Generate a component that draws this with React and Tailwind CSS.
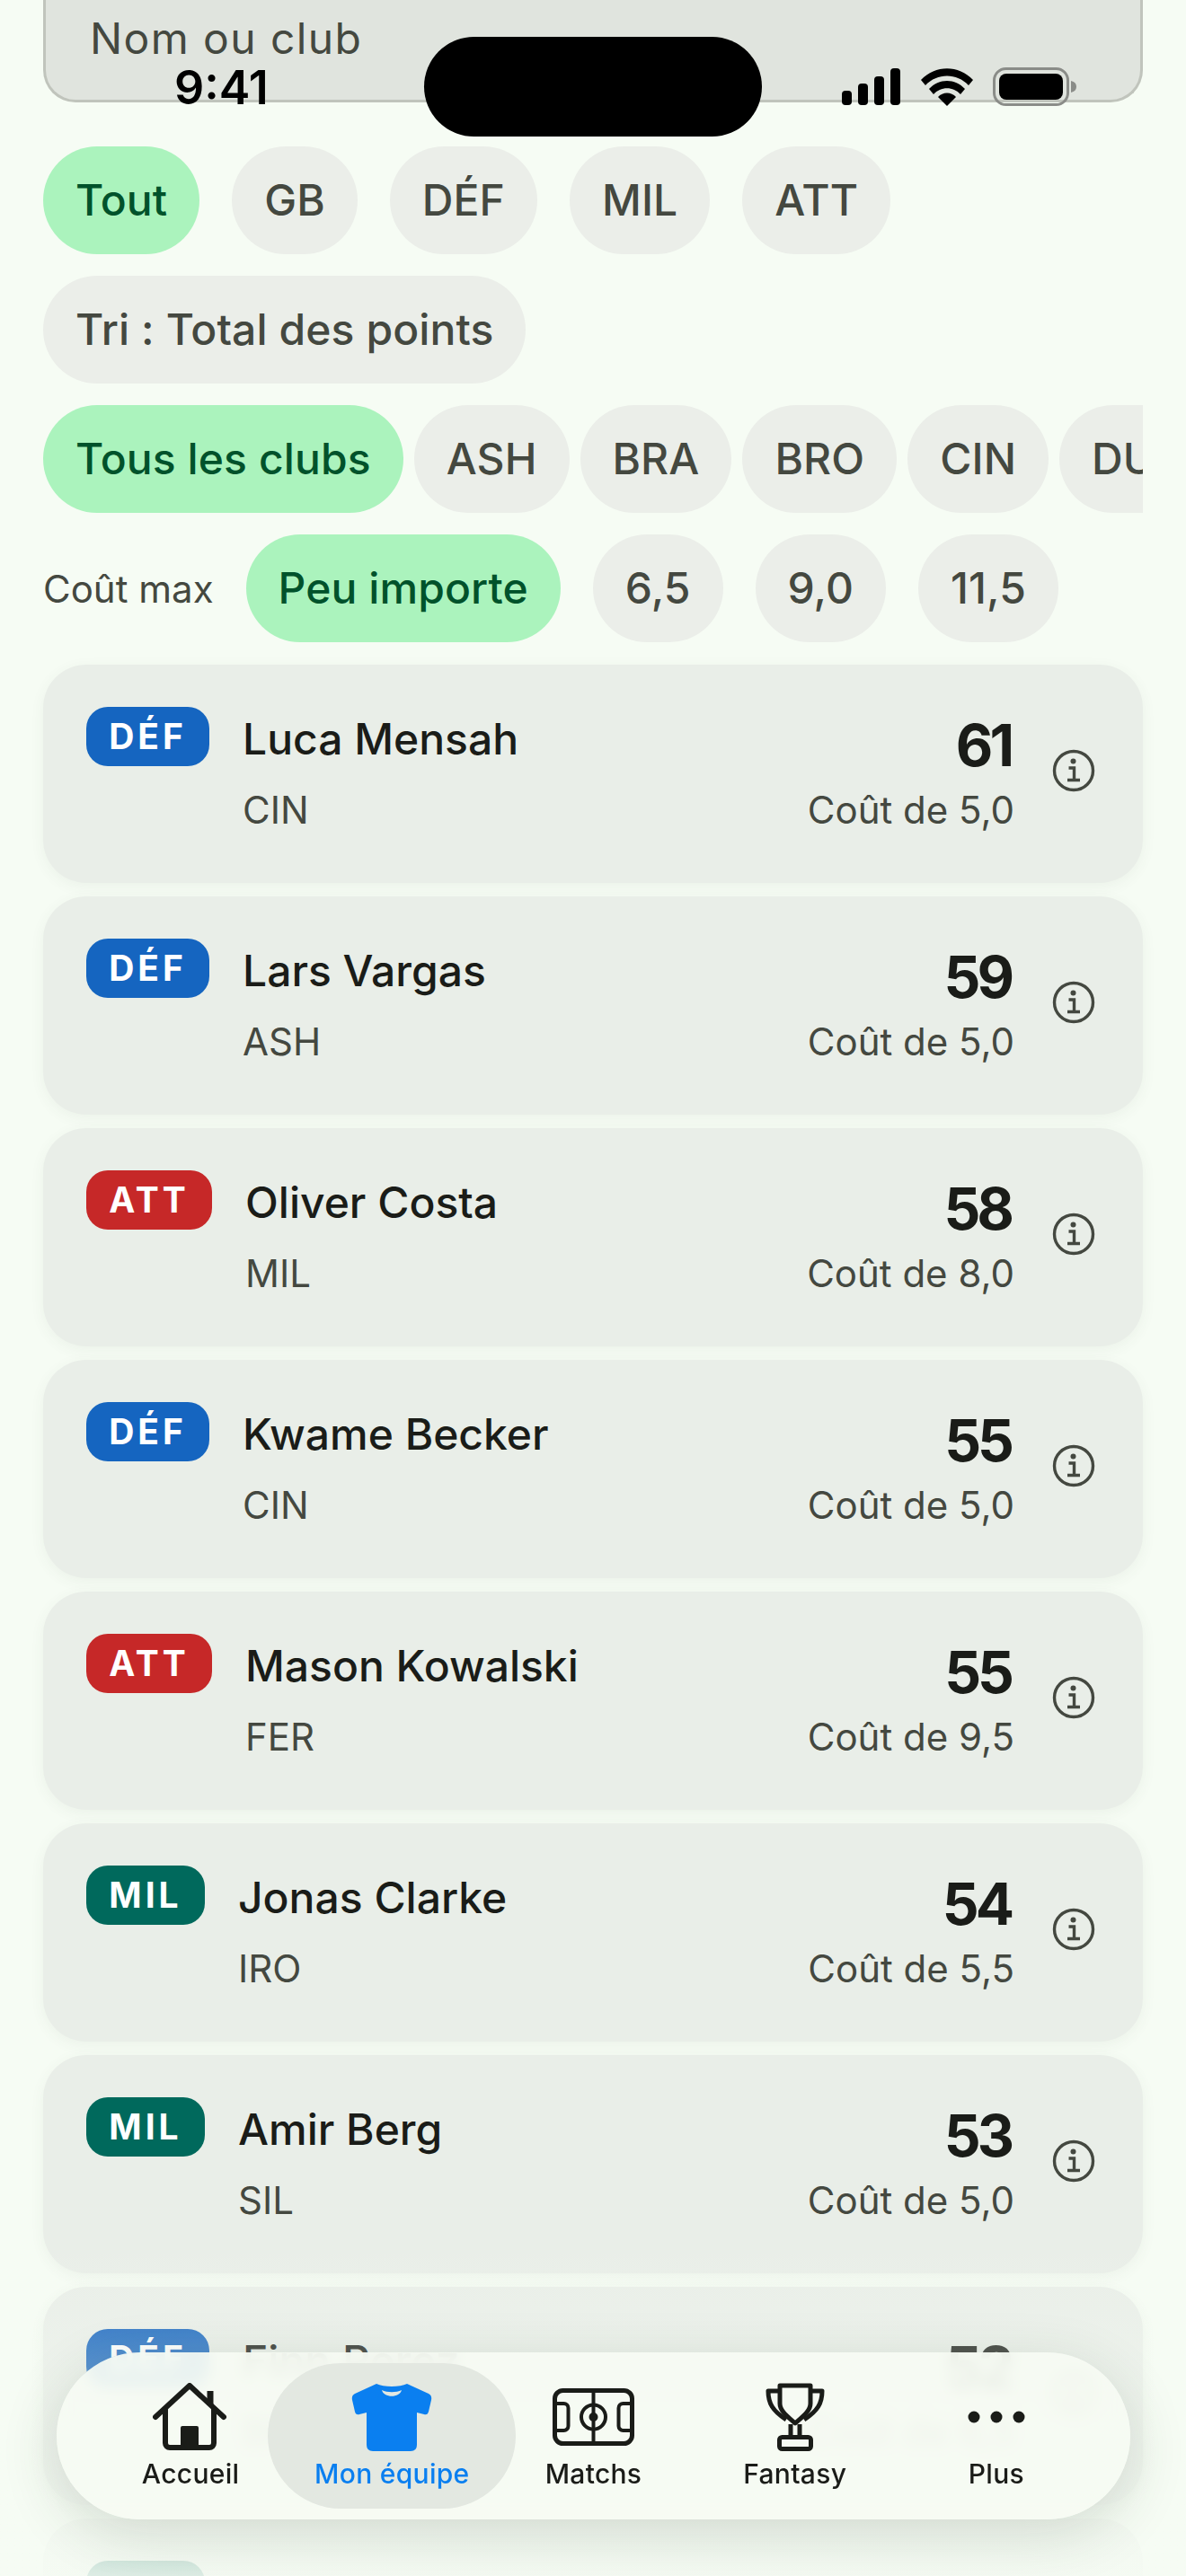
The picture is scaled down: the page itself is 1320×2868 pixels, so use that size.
import React from 'react';

const font = { fontFamily: 'Inter, "Liberation Sans", sans-serif' };

const BADGE = {
  'DÉF': 'bg-[#1565c0] w-[137px]',
  ATT: 'bg-[#c62828] w-[140px]',
  MIL: 'bg-[#00695c] w-[132px]',
};

const PLAYERS = [
  { pos: 'DÉF', name: 'Luca Mensah', club: 'CIN', pts: 61, cost: '5,0' },
  { pos: 'DÉF', name: 'Lars Vargas', club: 'ASH', pts: 59, cost: '5,0' },
  { pos: 'ATT', name: 'Oliver Costa', club: 'MIL', pts: 58, cost: '8,0' },
  { pos: 'DÉF', name: 'Kwame Becker', club: 'CIN', pts: 55, cost: '5,0' },
  { pos: 'ATT', name: 'Mason Kowalski', club: 'FER', pts: 55, cost: '9,5' },
  { pos: 'MIL', name: 'Jonas Clarke', club: 'IRO', pts: 54, cost: '5,5' },
  { pos: 'MIL', name: 'Amir Berg', club: 'SIL', pts: 53, cost: '5,0' },
  { pos: 'DÉF', name: 'Finn Perez', club: 'BRO', pts: 52, cost: '6,5' },
];

function Chip({ active, children }) {
  return (
    <div
      className={`h-[120px] shrink-0 rounded-full px-[36px] flex items-center text-[48px] font-medium tracking-[0.1px] ${
        active ? 'bg-[#abf3bd] text-[#00522b]' : 'bg-[#ebeee9] text-[#444840]'
      }`}
    >
      {children}
    </div>
  );
}

function InfoIcon() {
  return (
    <svg width="48" height="48" viewBox="0 0 48 48" fill="none" stroke="#444840" className="shrink-0">
      <circle cx="24" cy="24" r="21.5" strokeWidth="3.4" />
      <circle cx="23.5" cy="13.5" r="3" fill="#444840" stroke="none" />
      <path d="M18.5 21h6v13M17 34.5h14" strokeWidth="3.4" />
    </svg>
  );
}

function PlayerCard({ p }) {
  return (
    <div className="h-[243px] shrink-0 rounded-[48px] bg-[#e9eee8] shadow-[0_4px_16px_rgba(60,80,60,0.06)] pl-[48px] pr-[53px] pt-[47px] flex items-start">
      <div
        className={`h-[66px] rounded-[24px] flex items-center justify-center text-white text-[39px] font-bold tracking-[4px] ${BADGE[p.pos]}`}
      >
        {p.pos}
      </div>
      <div className="ml-[37px] pt-[7px] flex-1 min-w-0">
        <div className="text-[48px] font-medium leading-[58px] text-[#1a1c18]">{p.name}</div>
        <div className="mt-[24px] text-[42px] leading-[52px] text-[#444840]">{p.club}</div>
      </div>
      <div className="flex flex-col items-end mr-[42px] pt-[7px]">
        <div className="text-[64px] font-bold leading-[72px] tracking-[-4px] pr-[4px] text-[#1a1c18]">{p.pts}</div>
        <div className="mt-[10px] text-[42px] leading-[52px] text-[#444840]">Coût de {p.cost}</div>
      </div>
      <div className="mt-[47px]">
        <InfoIcon />
      </div>
    </div>
  );
}

function StatusBar() {
  return (
    <div className="absolute inset-x-0 top-0 h-[160px] pointer-events-none">
      <div className="absolute left-[194px] top-[66px] text-[52px] font-semibold leading-[64px] text-black">9:41</div>
      <div className="absolute left-[472px] top-[41px] w-[376px] h-[111px] rounded-[56px] bg-black" />
      <svg className="absolute left-[937px] top-[75px]" width="262" height="44" viewBox="0 0 262 44">
        <rect x="0" y="26" width="11" height="16" rx="4" fill="#000" />
        <rect x="18" y="18" width="11" height="24" rx="4" fill="#000" />
        <rect x="36" y="10" width="11" height="32" rx="4" fill="#000" />
        <rect x="54" y="1" width="11" height="41" rx="4" fill="#000" />
        <path d="M88 14 C104 -3 130 -3 146 14 L141 20 C128 6 106 6 93 20Z" fill="#000" />
        <path d="M97 24 C108 12 126 12 137 24 L132 30 C124 21 110 21 102 30Z" fill="#000" />
        <path d="M107 33 C112 27 122 27 127 33 L117 43Z" fill="#000" />
        <rect x="169.5" y="1.5" width="82" height="40" rx="13" fill="none" stroke="#8a8c88" strokeWidth="3" />
        <rect x="175" y="7" width="71" height="29" rx="8" fill="#000" />
        <path d="M255 15 C259 16 261 18 261 21.5 C261 25 259 27 255 28Z" fill="#8a8c88" />
      </svg>
    </div>
  );
}

function HouseIcon() {
  return (
    <svg width="84" height="76" viewBox="0 0 84 76" fill="none" stroke="#1a1c18" strokeWidth="6" strokeLinecap="round" strokeLinejoin="round">
      <path d="M3 38 L41 3 L79 38" />
      <path d="M64 9v16" strokeWidth="7" strokeLinecap="butt" />
      <path d="M14 30v37a5 5 0 0 0 5 5h44a5 5 0 0 0 5-5V30" />
      <path d="M31 72V50a2 2 0 0 1 2-2h16a2 2 0 0 1 2 2v22z" fill="#1a1c18" stroke="none" />
    </svg>
  );
}

function ShirtIcon() {
  return (
    <svg width="90" height="76" viewBox="0 0 90 76">
      <path
        d="M28 1 C36 5 54 5 62 1 L86 12 Q90 14 89 19 L86 32 Q85 36 81 35 L73 33 V69 Q73 76 66 76 H24 Q17 76 17 69 V33 L9 35 Q5 36 4 32 L1 19 Q0 14 4 12Z"
        fill="#0a7ff0"
      />
      <path d="M34 8 C40 11 50 11 56 8 C54 17 36 17 34 8Z" fill="#e3e8e1" />
    </svg>
  );
}

function PitchIcon() {
  return (
    <svg width="91" height="64" viewBox="0 0 91 64" fill="none" stroke="#1a1c18" strokeWidth="5">
      <rect x="2.5" y="2.5" width="86" height="59" rx="9" />
      <path d="M45.5 2.5v59" strokeWidth="4" />
      <circle cx="45.5" cy="32" r="13.5" strokeWidth="4" />
      <circle cx="45.5" cy="32" r="5" fill="#1a1c18" stroke="none" />
      <path d="M2.5 17h10a5 5 0 0 1 5 5v20a5 5 0 0 1-5 5h-10" strokeWidth="4" />
      <path d="M88.5 17h-10a5 5 0 0 0-5 5v20a5 5 0 0 0 5 5h10" strokeWidth="4" />
    </svg>
  );
}

function TrophyIcon() {
  return (
    <svg width="66" height="76" viewBox="0 0 66 76" fill="none" stroke="#1a1c18" strokeWidth="5" strokeLinejoin="round">
      <path d="M16 3h34v20c0 8-8 14-17 22-9-8-17-14-17-22z" />
      <path d="M16 9H3c0 14 5 22 20 32" />
      <path d="M50 9h13c0 14-5 22-20 32" />
      <path d="M28 46v15M38 46v15" />
      <rect x="15.5" y="60.5" width="35" height="13" rx="3" />
    </svg>
  );
}

function DotsIcon() {
  return (
    <svg width="64" height="14" viewBox="0 0 64 14" fill="#1a1c18">
      <circle cx="7" cy="7" r="6.5" />
      <circle cx="32" cy="7" r="6.5" />
      <circle cx="57" cy="7" r="6.5" />
    </svg>
  );
}

const TABS = [
  { label: 'Accueil', icon: <HouseIcon /> },
  { label: 'Mon équipe', icon: <ShirtIcon />, active: true },
  { label: 'Matchs', icon: <PitchIcon /> },
  { label: 'Fantasy', icon: <TrophyIcon /> },
  { label: 'Plus', icon: <DotsIcon /> },
];

function BottomNav() {
  return (
    <div className="absolute left-[63px] top-[2619px] w-[1195px] h-[186px] rounded-[93px] bg-[#f6fbf3]/92 backdrop-blur-[8px] shadow-[0_16px_64px_rgba(40,60,40,0.16)] px-[37px] flex">
      {TABS.map((t) => (
        <div key={t.label} className="relative flex-1 flex flex-col items-center">
          {t.active && <div className="absolute -left-[26px] -right-[26px] top-[12px] bottom-[12px] rounded-full bg-[#e3e8e1]" />}
          <div className="relative h-[76px] mt-[34px] flex items-center justify-center">{t.icon}</div>
          <div
            className={`relative mt-[5px] text-[30px] leading-[40px] font-medium tracking-[0.3px] whitespace-nowrap ${
              t.active ? 'text-[#0a7ff0]' : 'text-[#1a1c18]'
            }`}
          >
            {t.label}
          </div>
        </div>
      ))}
    </div>
  );
}

export default function App() {
  return (
    <div style={font} className="relative w-[1320px] h-[2868px] overflow-hidden bg-[#f6fcf4]">
      <div className="px-[48px] flex flex-col">
        <div className="h-[114px] rounded-b-[36px] bg-[#e0e4de] border-x-[3px] border-b-[3px] border-[#c0c4bc] pl-[49px] pt-[14px] text-[48px] leading-[58px] tracking-[1.4px] text-[#444840]">
          Nom ou club
        </div>

        <div className="mt-[49px] flex gap-[36px]">
          <Chip active>Tout</Chip>
          <Chip>GB</Chip>
          <Chip>DÉF</Chip>
          <Chip>MIL</Chip>
          <Chip>ATT</Chip>
        </div>

        <div className="mt-[24px] flex">
          <Chip>Tri : Total des points</Chip>
        </div>

        <div className="mt-[24px] flex gap-[12px] overflow-hidden">
          <Chip active>Tous les clubs</Chip>
          <Chip>ASH</Chip>
          <Chip>BRA</Chip>
          <Chip>BRO</Chip>
          <Chip>CIN</Chip>
          <Chip>DUN</Chip>
        </div>

        <div className="mt-[24px] flex items-center gap-[36px]">
          <div className="text-[42px] text-[#444840]">Coût max</div>
          <Chip active>Peu importe</Chip>
          <Chip>6,5</Chip>
          <Chip>9,0</Chip>
          <Chip>11,5</Chip>
        </div>

        <div className="mt-[25px] flex flex-col gap-[15px]">
          {PLAYERS.map((p) => (
            <PlayerCard key={p.name} p={p} />
          ))}
          {/* next row, only its badge shows above the fold */}
          <div className="h-[243px] shrink-0 rounded-[48px] bg-[#e9eee8] pl-[48px] pt-[47px]">
            <div className="h-[66px] w-[132px] rounded-[24px] bg-[#00695c]" />
          </div>
        </div>
      </div>

      <div className="absolute inset-x-0 top-[2500px] bottom-0 bg-gradient-to-b from-[#f6fcf4]/0 via-[#f6fcf4]/40 to-[#f6fcf4]/90" />
      <BottomNav />
      <StatusBar />
    </div>
  );
}
